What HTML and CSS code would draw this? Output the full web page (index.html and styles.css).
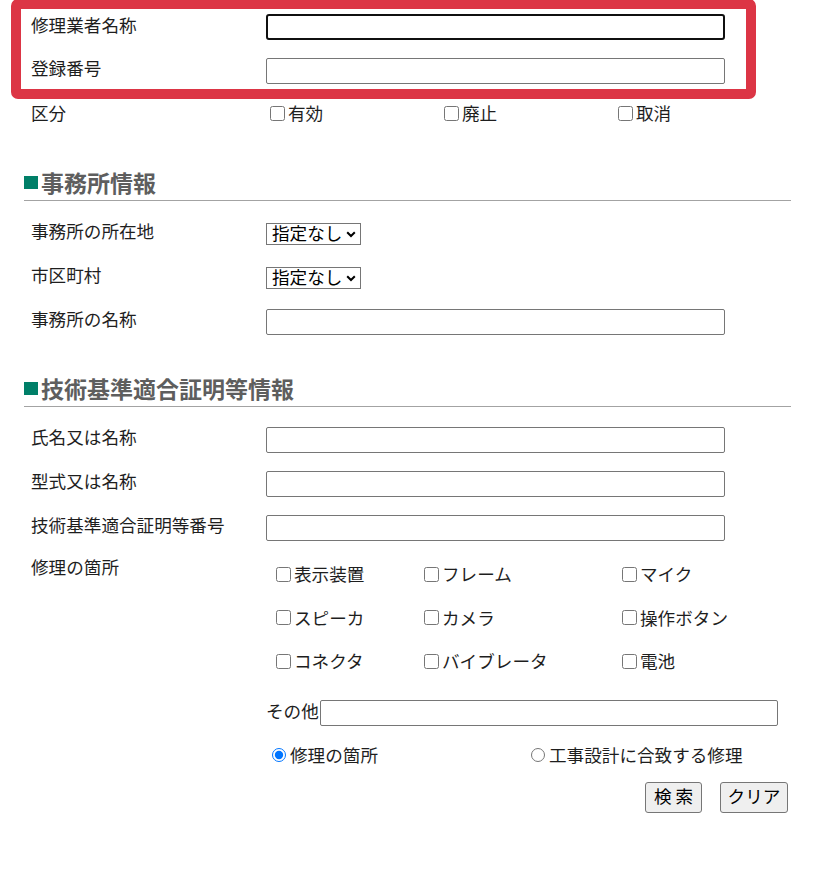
FILE: index.html
```html
<!DOCTYPE html>
<html lang="ja">
<head>
<meta charset="utf-8">
<title>検索</title>
<link rel="stylesheet" href="styles.css">
</head>
<body>
<div class="page">
  <div class="row">
    <span class="lbl">修理業者名称</span>
    <input class="txt focused" type="text">
  </div>
  <div class="row">
    <span class="lbl">登録番号</span>
    <input class="txt" type="text">
  </div>
  <div class="row row-kubun">
    <span class="lbl lbl-kubun">区分</span>
    <div class="kubun">
      <label class="chk"><input type="checkbox">有効</label>
      <label class="chk"><input type="checkbox">廃止</label>
      <label class="chk"><input type="checkbox">取消</label>
    </div>
  </div>

  <h2 class="sec sec-first"><span class="sq"></span>事務所情報</h2>
  <div class="rows">
    <div class="row row-44">
      <span class="lbl">事務所の所在地</span>
      <span class="sel-wrap">
        <select class="sel"><option>指定なし</option></select>
        <svg class="chev" width="10" height="7" viewBox="0 0 10 7"><polyline points="1.2,1.2 5,5 8.8,1.2" fill="none" stroke="#000" stroke-width="2"/></svg>
      </span>
    </div>
    <div class="row row-44">
      <span class="lbl">市区町村</span>
      <span class="sel-wrap">
        <select class="sel"><option>指定なし</option></select>
        <svg class="chev" width="10" height="7" viewBox="0 0 10 7"><polyline points="1.2,1.2 5,5 8.8,1.2" fill="none" stroke="#000" stroke-width="2"/></svg>
      </span>
    </div>
    <div class="row row-44">
      <span class="lbl">事務所の名称</span>
      <input class="txt" type="text">
    </div>
  </div>

  <h2 class="sec"><span class="sq"></span>技術基準適合証明等情報</h2>
  <div class="rows">
    <div class="row row-44">
      <span class="lbl">氏名又は名称</span>
      <input class="txt" type="text">
    </div>
    <div class="row row-44">
      <span class="lbl">型式又は名称</span>
      <input class="txt" type="text">
    </div>
    <div class="row row-44">
      <span class="lbl">技術基準適合証明等番号</span>
      <input class="txt" type="text">
    </div>
    <div class="row-repair">
      <span class="lbl lbl-top">修理の箇所</span>
      <div class="repair-col">
        <div class="parts">
          <label class="chk"><input type="checkbox">表示装置</label>
          <label class="chk"><input type="checkbox">フレーム</label>
          <label class="chk"><input type="checkbox">マイク</label>
          <label class="chk"><input type="checkbox">スピーカ</label>
          <label class="chk"><input type="checkbox">カメラ</label>
          <label class="chk"><input type="checkbox">操作ボタン</label>
          <label class="chk"><input type="checkbox">コネクタ</label>
          <label class="chk"><input type="checkbox">バイブレータ</label>
          <label class="chk"><input type="checkbox">電池</label>
        </div>
        <div class="other">
          <span class="other-lbl">その他</span><input class="txt txt-other" type="text">
        </div>
        <div class="radios">
          <label class="rad rad-first"><input type="radio" name="kind" checked>修理の箇所</label>
          <label class="rad"><input type="radio" name="kind">工事設計に合致する修理</label>
        </div>
      </div>
    </div>
  </div>

  <div class="actions">
    <button class="btn btn-search" type="button">検 索</button>
    <button class="btn btn-clear" type="button">クリア</button>
  </div>

  <div class="overlay"></div>
</div>
</body>
</html>
```

FILE: styles.css
```css
html, body {
  margin: 0;
  padding: 0;
  background: #fff;
}

body {
  font-family: "Noto Sans CJK JP", "Noto Sans", sans-serif;
  font-size: 17.6px;
  color: #1e1e1e;
}

.page {
  position: relative;
  padding-top: 5.5px;
  height: 869.5px;
}

.row {
  display: flex;
  align-items: center;
  height: 43.5px;
  padding-left: 31px;
}

.row-kubun {
  height: 41.5px;
}

.row-44 {
  height: 44px;
}

.lbl {
  display: block;
  width: 235px;
  flex: none;
  line-height: 24px;
  padding-bottom: 5px;
}

.lbl-kubun {
  padding-bottom: 1px;
}

.txt {
  box-sizing: border-box;
  width: 459px;
  height: 26px;
  margin: 0;
  padding: 0 4px;
  border: 1px solid #767676;
  border-radius: 2px;
  background: #fff;
  font: inherit;
}

.txt.focused {
  border: 2px solid #101010;
  border-radius: 3px;
}

.kubun {
  display: flex;
  padding-left: 4px;
}

.kubun .chk {
  width: 174px;
}

.chk {
  display: flex;
  align-items: center;
  line-height: 24px;
}

.chk input {
  width: 15px;
  height: 15px;
  margin: 0 3px 0 0;
  flex: none;
}

.sec {
  display: flex;
  align-items: center;
  margin: 29.5px 0 0 24px;
  width: 767px;
  padding: 0 0 3px 0;
  border-bottom: 1px solid #a3a3a3;
  font-size: 23px;
  line-height: 30px;
  font-weight: bold;
  color: #5e5e5e;
}

.sec-first {
  margin-top: 33px;
}

.sq {
  display: inline-block;
  width: 14px;
  height: 13px;
  margin-right: 3px;
  background: #007f68;
}

.rows {
  margin-top: 10.5px;
}

.sel-wrap {
  position: relative;
  display: block;
  width: 95px;
  height: 22px;
}

.sel {
  -webkit-appearance: none;
  appearance: none;
  box-sizing: border-box;
  display: block;
  width: 95px;
  height: 22px;
  margin: 0;
  padding: 0 0 2px 5px;
  border: 1px solid #767676;
  border-radius: 0;
  background-color: #fff;
  color: #000;
  font-family: inherit;
  font-size: 17.6px;
  line-height: 18px;
}

.chev {
  position: absolute;
  right: 5px;
  top: 8px;
  pointer-events: none;
}

.row-repair {
  display: flex;
  align-items: flex-start;
  padding-left: 31px;
}

.lbl-top {
  line-height: 40px;
  padding-bottom: 0;
  margin-top: -3px;
}

.repair-col {
  display: flex;
  flex-direction: column;
}

.parts {
  display: grid;
  grid-template-columns: 148px 198px 160px;
  grid-auto-rows: 43.5px;
  align-items: center;
  padding: 3px 0 0 10px;
}

.other {
  display: flex;
  align-items: center;
  height: 44px;
  margin-top: 7.5px;
}

.other-lbl {
  width: 54px;
  flex: none;
  line-height: 24px;
  padding-bottom: 3px;
}

.txt-other {
  width: 458px;
}

.radios {
  display: flex;
  align-items: center;
  height: 40px;
}

.rad {
  display: flex;
  align-items: center;
  line-height: 24px;
}

.rad input {
  width: 14px;
  height: 14px;
  margin: 0 4px 0 0;
  flex: none;
}

.rad-first {
  width: 259px;
  padding-left: 6px;
}

.actions {
  display: flex;
  justify-content: flex-end;
  gap: 18px;
  width: 788px;
  margin-top: 7px;
}

.btn {
  box-sizing: border-box;
  height: 31px;
  padding: 0 0 2px 0;
  margin: 0;
  border: 1px solid #767676;
  border-radius: 3px;
  background: #efefef;
  color: #000;
  font-family: inherit;
  font-size: 17.6px;
  line-height: 20px;
}

.btn-search {
  width: 57px;
}

.btn-clear {
  width: 68px;
}

.overlay {
  position: absolute;
  left: 11px;
  top: -1px;
  width: 745px;
  height: 100px;
  box-sizing: border-box;
  border: 10px solid #dc3545;
  border-radius: 7px;
  pointer-events: none;
}
```
